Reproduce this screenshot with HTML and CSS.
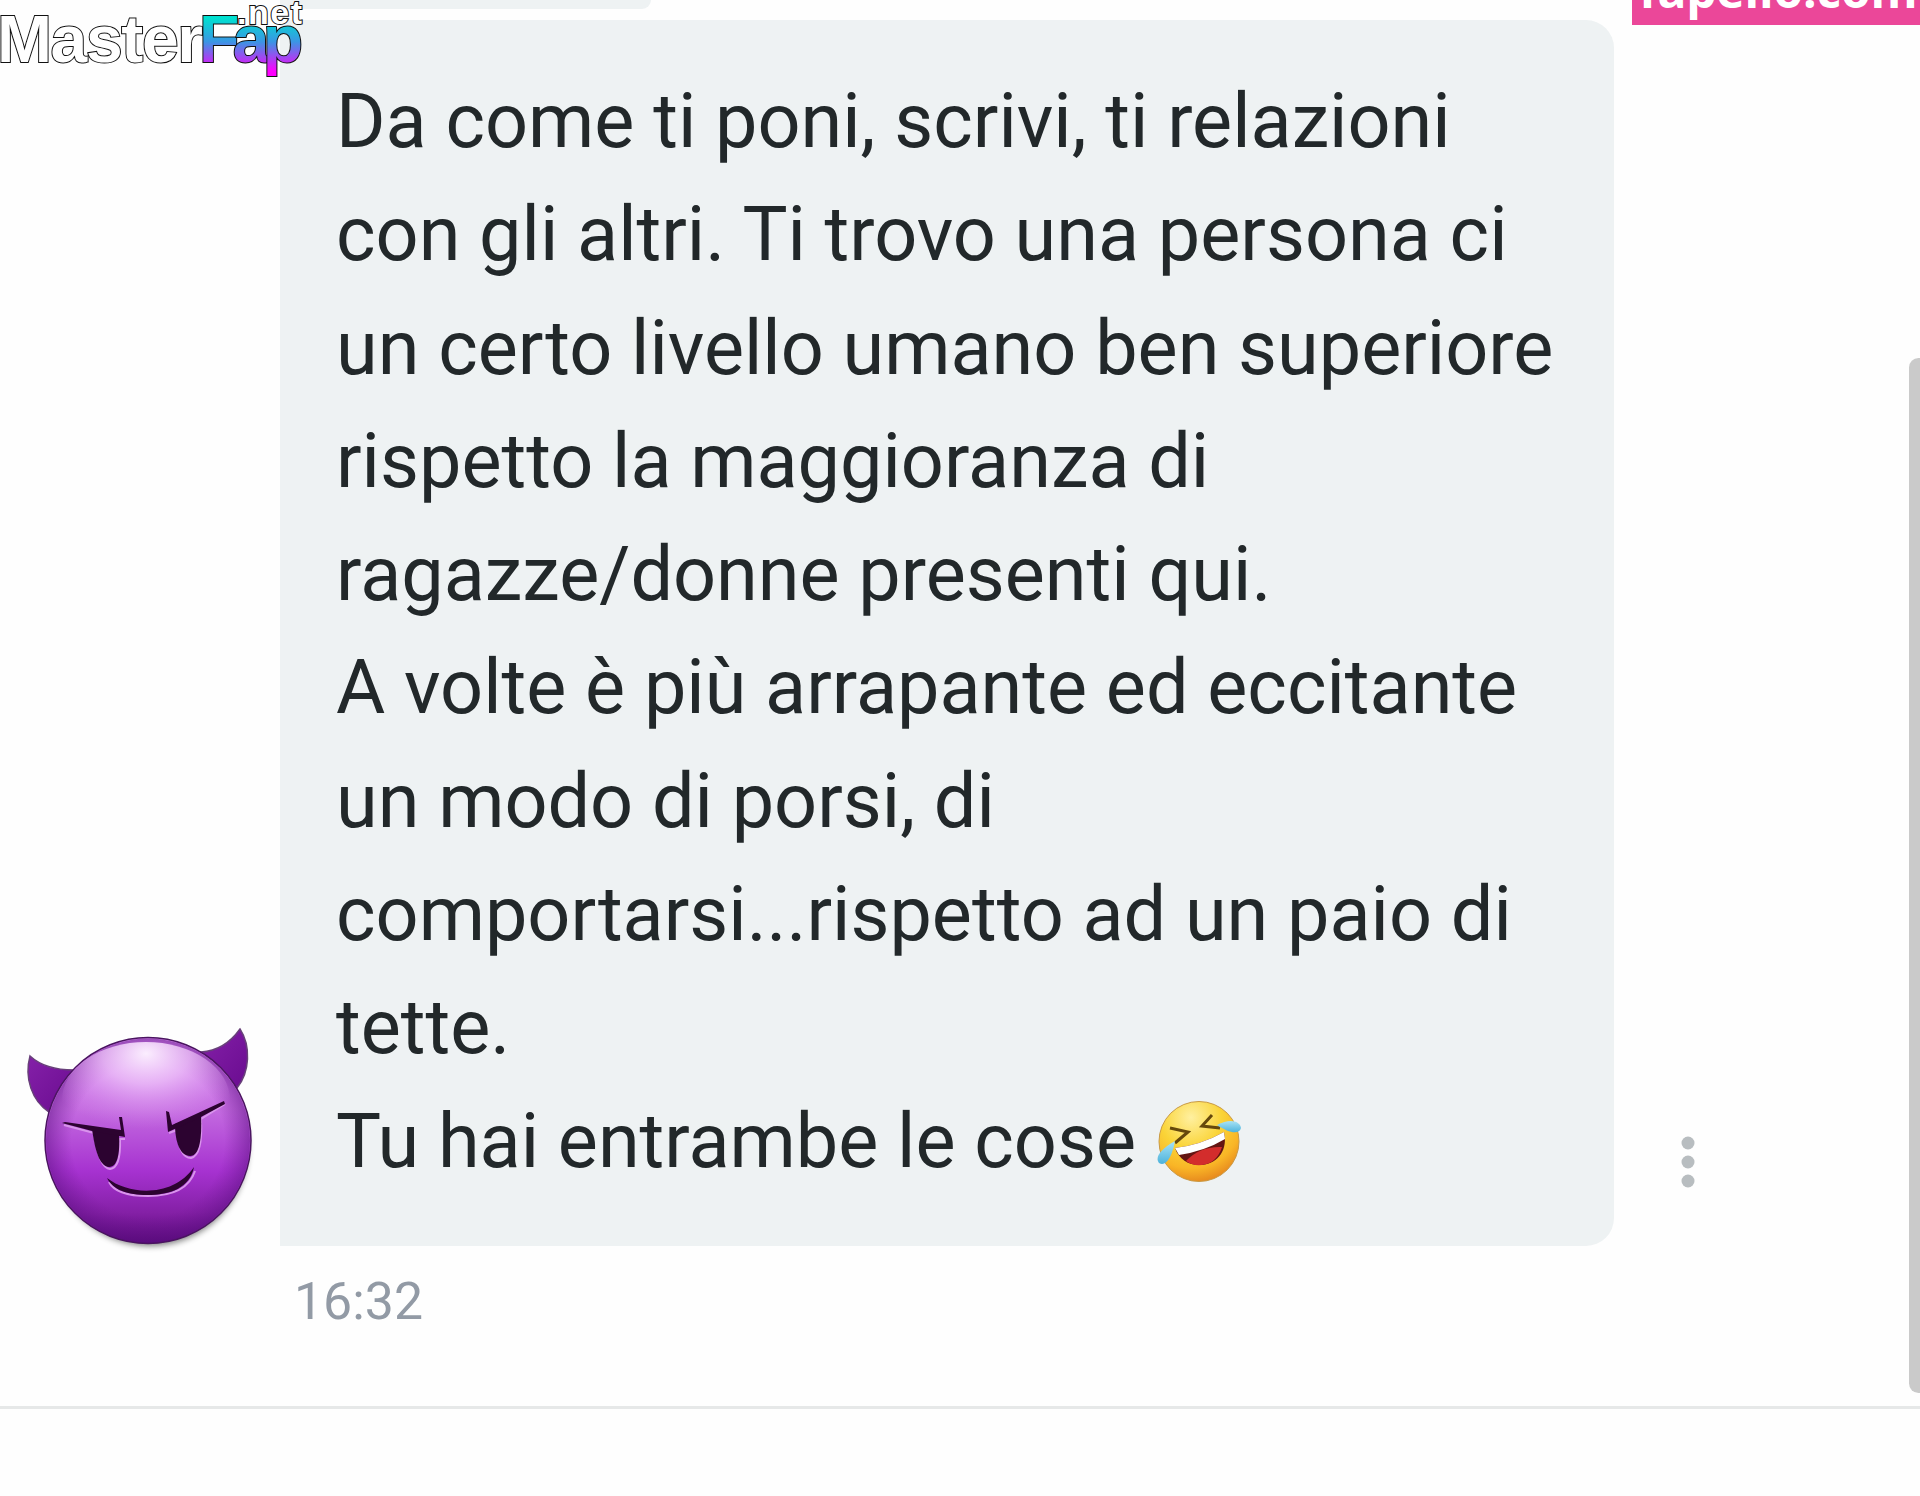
FILE: index.html
```
<!DOCTYPE html>
<html lang="it">
<head>
    <meta charset="UTF-8">
    <meta name="viewport" content="width=device-width, initial-scale=1.0">
    <title>Chat</title>
    <link rel="stylesheet" href="styles.css">
</head>
<body>
    <main class="chat">
        <div class="previous"></div>
        <div class="message">
            <div class="avatar">
                <svg width="280" height="224" viewBox="0 22 280 224">
                    <defs>
                        <linearGradient id="face" x1="0" y1="0" x2="0" y2="1">
                            <stop offset="0" stop-color="#d88af0"/>
                            <stop offset=".35" stop-color="#c46be0"/>
                            <stop offset=".65" stop-color="#a632d0"/>
                            <stop offset=".85" stop-color="#8420a6"/>
                            <stop offset="1" stop-color="#570878"/>
                        </linearGradient>
                        <radialGradient id="edge">
                            <stop offset=".75" stop-color="#6c1590" stop-opacity="0"/>
                            <stop offset="1" stop-color="#5c0f82" stop-opacity=".5"/>
                        </radialGradient>
                        <radialGradient id="shine" cx=".5" cy=".1" r=".65">
                            <stop offset="0" stop-color="#fbeefe"/>
                            <stop offset=".4" stop-color="#efc4fa" stop-opacity=".75"/>
                            <stop offset="1" stop-color="#d88af0" stop-opacity="0"/>
                        </radialGradient>
                        <linearGradient id="horn" x1="0" y1="0" x2="1" y2="1">
                            <stop offset="0" stop-color="#8420a8"/>
                            <stop offset="1" stop-color="#6a0c90"/>
                        </linearGradient>
                        <filter id="soft" x="-20%" y="-20%" width="140%" height="160%">
                            <feGaussianBlur stdDeviation="3"/>
                        </filter>
                    </defs>
                    <ellipse cx="150" cy="147" rx="98" ry="99" fill="#000" opacity=".5" filter="url(#soft)"/>
                    <path d="M30 56C42 67 57 70 74 70L49 112C32 101 24 78 30 56Z" fill="url(#horn)" stroke="#68407a" stroke-width="1.5"/>
                    <path d="M240 29C230 43 218 51 201 52L237 88C250 72 251 46 240 29Z" fill="url(#horn)" stroke="#68407a" stroke-width="1.5"/>
                    <circle cx="148" cy="140.500" r="103" fill="url(#face)" stroke="#4a1460" stroke-width="1.5"/>
                    <circle cx="148" cy="140.500" r="102" fill="url(#edge)"/>
                    <ellipse cx="146" cy="100" rx="84" ry="58" fill="url(#shine)"/>
                    <g fill="none" stroke="#d994ec" stroke-width="2" transform="translate(1 2)">
                        <path d="M63 123L93 131Q98 166 109 167Q120 166 119 137L124 137"/>
                        <path d="M168 131L176 128Q178 156 190 156Q202 153 200 117L224 102"/>
                        <path d="M108 180C113 190 128 194 147 194C170 194 188 187 194 169"/>
                    </g>
                    <g fill="#2c0330">
                        <path d="M92 129L119 134C120 152 118 167 109 167C99 166 95 150 92 129Z"/>
                        <path d="M175 124L201 115C202 137 200 156 190 156C180 156 175 142 175 124Z"/>
                        <path d="M62 123L65 122L121 130L119 117L122 117L125 137L92 131Z"/>
                        <path d="M166 111L169 112L172 125L224 101L225 104L201 117L168 132Z"/>
                        <path d="M107 178C130 196 174 197 194 167C190 188 170 195 147 195C128 195 113 190 107 178Z"/>
                    </g>
                </svg>
            </div>
            <div class="bubble">Da come ti poni, scrivi, ti relazioni<br>
                con gli altri. Ti trovo una persona ci<br>
                un certo livello umano ben superiore<br>
                rispetto la maggioranza di<br>
                ragazze/donne presenti qui.<br>
                A volte è più arrapante ed eccitante<br>
                un modo di porsi, di<br>
                comportarsi...rispetto ad un paio di<br>
                tette.<br>
                Tu hai entrambe le cose <svg class="emoji" width="86" height="84" viewBox="0 0 86 84">
                    <defs>
                        <radialGradient id="yellow" cx=".4" cy=".2" r=".85">
                            <stop offset="0" stop-color="#fff0a0"/>
                            <stop offset=".45" stop-color="#fad438"/>
                            <stop offset=".75" stop-color="#f9b526"/>
                            <stop offset="1" stop-color="#e3801c"/>
                        </radialGradient>
                        <linearGradient id="tear" x1="0" y1="0" x2="0" y2="1">
                            <stop offset="0" stop-color="#a9e3f5"/>
                            <stop offset="1" stop-color="#4db3dc"/>
                        </linearGradient>
                    </defs>
                    <circle cx="42" cy="41.500" r="40" fill="url(#yellow)" stroke="#c99a45"/>
                    <path d="M13 28L31 32L18 43M55 15L45 26L63 28" fill="none" stroke="#65480c" stroke-width="3"/>
                    <path d="M18 48Q44 45 67 32C71 49 62 63 45 65C33 66 22 60 18 48Z" fill="#641512"/>
                    <path d="M29 61Q43 46 65 47Q60 63 45 65Q35 66 29 61Z" fill="#d32d2c"/>
                    <path d="M18 48Q44 45 67 32L68 39Q48 51 22 55Z" fill="#fff"/>
                    <path d="M18 41C2 50-2 58 2 63C9 67 15 57 18 41Z" fill="url(#tear)"/>
                    <path d="M60 25C73 18 83 21 84 28C82 35 72 33 60 25Z" fill="url(#tear)"/>
                </svg>
            </div>
            <svg class="more" width="14" height="52" viewBox="0 0 14 52" fill="#b8bdc0">
                <circle cx="7" cy="7" r="6.500"/>
                <circle cx="7" cy="26" r="6.500"/>
                <circle cx="7" cy="45" r="6.500"/>
            </svg>
        </div>
        <div class="time">16:32</div>
    </main>
    <footer class="composer"></footer>

    <div class="scrollbar"></div>
    <svg class="logo" width="310" height="84" viewBox="0 0 310 84">
        <defs>
            <linearGradient id="fap" gradientUnits="userSpaceOnUse" x1="0" y1="18" x2="0" y2="77">
                <stop offset="0" stop-color="#00e0d0"/>
                <stop offset=".4" stop-color="#3a96e4"/>
                <stop offset=".65" stop-color="#9a4cf0"/>
                <stop offset=".9" stop-color="#ff00ff"/>
            </linearGradient>
        </defs>
        <text class="logo-main" x="-3" y="62" textLength="206">Master</text>
        <text class="logo-fap" x="199" y="62" textLength="104" fill="url(#fap)">Fap</text>
        <text class="logo-net" x="237" y="24" textLength="65">.net</text>
    </svg>
    <div class="badge"><span class="badge-text">fapello.com</span></div>
</body>
</html>
```
FILE: styles.css
```
* {
    box-sizing: border-box;
}
body {
    margin: 0;
    position: relative;
    height: 1496px;
    overflow: hidden;
    background: #fefefe;
    font-family: Roboto, sans-serif;
}
.chat {
    height: 1409px;
    border-bottom: 3px solid #e6e8e8;
}
.previous {
    width: 371px;
    height: 9px;
    margin-left: 280px;
    background: #eef2f3;
    border-radius: 0 0 28px 0;
}
.message {
    display: flex;
    align-items: flex-end;
    margin-top: 11px;
}
.avatar {
    width: 280px;
    height: 224px;
}
.avatar svg {
    display: block;
    overflow: visible;
}
.bubble {
    width: 1333.5px;
    height: 1226px;
    padding: 45px 0 0 56px;
    background: #eef2f3;
    border-radius: 0 28px 28px 0;
    color: #22282a;
    font-size: 75.57px;
    line-height: 113.3px;
    white-space: nowrap;
}
.emoji {
    display: inline-block;
    margin-left: 2px;
    vertical-align: -17px;
}
.more {
    margin: 0 0 58.5px 67.5px;
}
.time {
    margin: 25px 0 0 294px;
    color: #929aa5;
    font-size: 51.8px;
    line-height: 62px;
}
.composer {
    height: 87px;
}
.scrollbar {
    position: absolute;
    top: 358px;
    right: -8px;
    width: 19px;
    height: 1035px;
    background: #cacaca;
    border-radius: 10px;
}
.logo {
    position: absolute;
    top: 0;
    left: 0;
    font-family: "Liberation Sans", Arial, sans-serif;
    font-weight: bold;
}
.logo text {
    paint-order: stroke;
    stroke: #111;
    stroke-width: 2;
}
.logo-main {
    fill: #fff;
    font-size: 66px;
}
.logo-fap {
    font-size: 66px;
}
.logo-net {
    fill: #fff;
    font-size: 34px;
}
.badge {
    position: absolute;
    top: 0;
    right: 0;
    width: 288px;
    height: 25px;
    padding-left: 7px;
    overflow: hidden;
    background: #eb4799;
    color: #fff;
    font-family: "Open Sans", sans-serif;
    font-size: 48px;
    font-weight: bold;
    line-height: 0;
    white-space: nowrap;
}
.badge-text {
    display: block;
    margin-top: -10px;
    letter-spacing: -0.2px;
}
```
